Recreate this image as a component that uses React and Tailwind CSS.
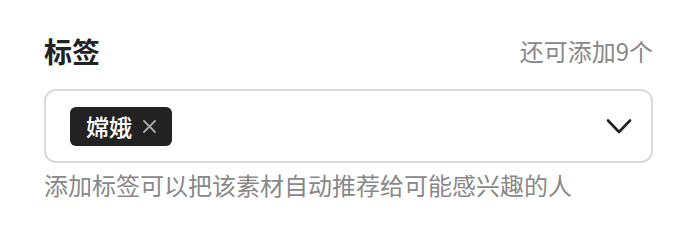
export default function App() {
  return (
    <div
      className="w-[700px] h-[250px] bg-white pl-[44px] pr-[47px] pt-[33px]"
      style={{ fontFamily: '"Noto Sans CJK SC", "Noto Sans", sans-serif' }}
    >
      <div className="flex items-center justify-between h-[36px]">
        <div className="text-[28px] font-semibold text-[#222222] leading-none">标签</div>
        <div className="text-[24px] text-[#888888] leading-none">还可添加9个</div>
      </div>

      <div className="mt-[20px] flex h-[74px] items-center justify-between rounded-[12px] border-2 border-[#dadada] pl-[24px] pr-[19px]">
        <div className="flex h-[39px] items-center rounded-[6px] bg-[#222222] pl-[16px] pr-[15px]">
          <span className="text-[23px] font-medium text-white leading-none">嫦娥</span>
          <svg
            className="ml-[10px]"
            width="15"
            height="15"
            viewBox="0 0 15 15"
            fill="none"
            stroke="#a8a8a8"
            strokeWidth="1.8"
            strokeLinecap="round"
          >
            <path d="M2 2 L13 13 M13 2 L2 13" />
          </svg>
        </div>
        <svg
          width="26"
          height="17"
          viewBox="0 0 26 17"
          fill="none"
          stroke="#222222"
          strokeWidth="2.6"
          strokeLinecap="round"
          strokeLinejoin="round"
        >
          <path d="M2 2.5 L13 14 L24 2.5" />
        </svg>
      </div>

      <div className="mt-[6px] flex h-[32px] items-center text-[24px] text-[#888888] leading-none">
        添加标签可以把该素材自动推荐给可能感兴趣的人
      </div>
    </div>
  );
}
